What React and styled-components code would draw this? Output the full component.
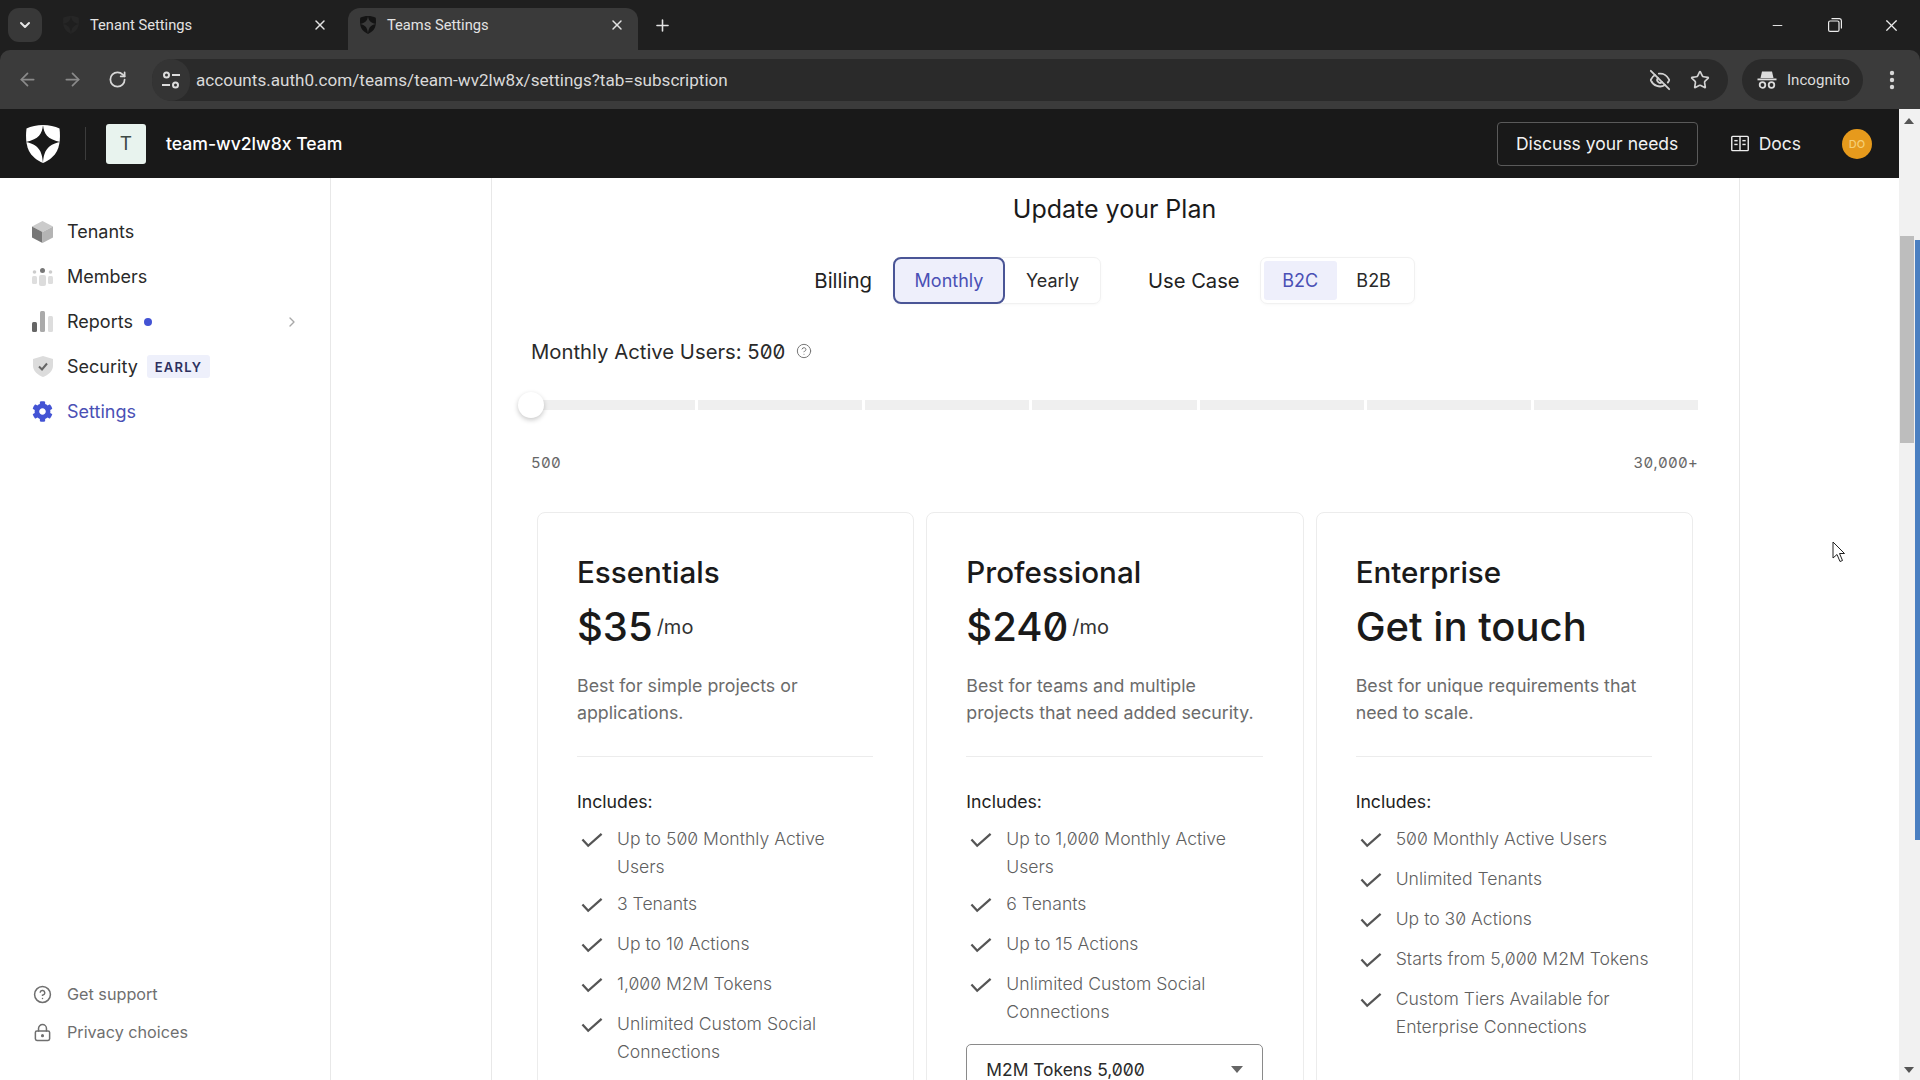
import React from 'react';
import styled, { createGlobalStyle } from 'styled-components';
import { ArrowLeft, ArrowRight, RotateCw, EyeOff, Star, X, Plus, ChevronDown, ChevronRight, CircleHelp, LockKeyhole, Minus } from 'lucide-react';
import { FaCog } from 'react-icons/fa';

const Global = createGlobalStyle`
  html, body { margin: 0; padding: 0; background: #fff; }
  * { box-sizing: border-box; }
  #root { height: 100vh; overflow: hidden; }
`;

const Page = styled.div`
  height: 1080px; display: flex; flex-direction: column; overflow: hidden; position: relative; background: #1f1f1f;
  font-family: Inter, "Liberation Sans", sans-serif; font-feature-settings: "zero" 1; color: #1e1e1e;
`;
const TabStrip = styled.div`
  height: 50px; flex: none; background: #1f1f1f; display: flex; align-items: flex-end; padding-left: 8px;
  font-family: Roboto, "Liberation Sans", sans-serif; font-feature-settings: normal;
`;
const TabList = styled.button`
  width: 34px; height: 34px; margin-bottom: 8px; border: 0; border-radius: 11px; background: #383838; color: #e6e6e6;
  display: flex; align-items: center; justify-content: center; padding: 0;
`;
const Tab = styled.div`
  width: ${p => p.$first ? '283px' : '290px'}; height: 42px; margin-left: ${p => p.$first ? '16px' : '0'}; margin-right: ${p => p.$first ? '7px' : '0'};
  border-radius: 12px 12px 0 0; background: ${p => p.$active ? '#3a3a3a' : 'transparent'};
  display: flex; align-items: center; padding: 0 13px 8px 12px; color: #e3e3e3; font-size: 14.7px; position: relative;
`;
const TabIcon = styled.span`width: 16px; height: 18px; margin-right: 11px; display: flex; flex: none; margin-left: ${p => p.$shift || 0}px;`;
const TabTitle = styled.span`flex: 1; white-space: nowrap;`;
const NewTab = styled.span`margin-left: 15px; margin-bottom: 15px; color: #e3e3e3; display: flex;`;
const WindowControls = styled.div`margin-left: auto; height: 50px; display: flex; color: #ececec;`;
const WinButton = styled.span`width: 57px; display: flex; align-items: center; justify-content: center;`;

const Toolbar = styled.div`
  height: 59px; flex: none; background: #3b3b3b; display: flex; align-items: center; padding-left: 5px;
  border-radius: 10px 10px 0 0; font-family: Roboto, "Liberation Sans", sans-serif; font-feature-settings: normal;
`;
const NavButton = styled.span`width: 45px; display: flex; justify-content: center; color: ${p => p.$dim ? '#8a8a8a' : '#d8d8d8'};`;
const UrlPill = styled.div`
  margin-left: 12px; flex: 1; height: 42px; border-radius: 21px; background: #2a2a2a; display: flex; align-items: center; padding-right: 8px;
`;
const SiteIcon = styled.span`width: 38px; height: 42px; margin-right: 6px; border-radius: 21px; background: #343434; display: flex; align-items: center; justify-content: center; color: #dcdcdc;`;
const Url = styled.span`flex: 1; font-size: 17.1px; color: #d9d9d9; white-space: nowrap;`;
const PillIcon = styled.span`width: 40px; display: flex; justify-content: center; color: #d2d2d2;`;
const Incognito = styled.div`
  margin-left: 14px; width: 121px; height: 42px; border-radius: 21px; background: #2a2a2a; color: #dcdcdc;
  display: flex; align-items: center; padding-left: 15px; gap: 10px; font-size: 15.1px;
`;
const MenuDots = styled.span`width: 57px; display: flex; justify-content: center;`;

const Body = styled.div`flex: 1; display: flex; min-height: 0; background: #fff;`;
const AppArea = styled.div`flex: 1; display: flex; flex-direction: column; min-width: 0;`;
const Header = styled.header`height: 69px; flex: none; background: #191919; display: flex; align-items: center; padding: 0 27px 0 26px; color: #fff;`;
const HeaderDivider = styled.span`width: 1px; height: 33px; background: #3c3c3c; margin: 0 20px 0 25px;`;
const TeamBox = styled.span`width: 40px; height: 40px; background: #e8f3ee; border-radius: 3px; color: #3d4a45; font-size: 19px; display: flex; align-items: center; justify-content: center;`;
const TeamName = styled.span`margin-left: 20px; font-size: 17.6px; font-weight: 500; flex: 1; font-feature-settings: normal;`;
const Discuss = styled.button`
  width: 201px; height: 44px; border: 1px solid #5a5a5a; border-radius: 4px; background: transparent; color: #f2f2f2;
  font: 400 17.5px Inter, sans-serif;
`;
const DocsLink = styled.span`margin-left: 33px; display: flex; align-items: center; gap: 10px; font-size: 17.5px; font-weight: 400; color: #eee;`;
const Avatar = styled.span`margin-left: 41px; width: 30px; height: 30px; border-radius: 50%; background: #e69a1c; color: #f5cf75; font-size: 11px; font-weight: 500; display: flex; align-items: center; justify-content: center;`;

const Content = styled.div`flex: 1; display: flex; min-height: 0;`;
const Sidebar = styled.aside`
  width: 331px; flex: none; border-right: 1px solid #e8e8e8; display: flex; flex-direction: column; justify-content: space-between;
  padding: 31px 0 29px 32px;
`;
const NavList = styled.nav`display: flex; flex-direction: column;`;
const NavRow = styled.div`
  height: 45px; display: flex; align-items: center; font-size: 18px; color: ${p => p.$active ? '#4a50b5' : '#2a2a2a'};
`;
const NavIcon = styled.span`width: 21px; margin-right: 14px; display: flex; justify-content: center; flex: none;`;
const Dot = styled.span`width: 8px; height: 8px; border-radius: 50%; background: #4353d4; margin-left: 11px;`;
const Early = styled.span`margin-left: 9px; height: 23px; padding: 0 8px; display: flex; align-items: center; background: #eef0fb; border-radius: 3px; font-size: 13px; font-weight: 600; letter-spacing: 1.2px; color: #2d2f5e;`;
const NavChevron = styled.span`margin-left: auto; margin-right: 30px; color: #a8a8a8; display: flex;`;
const FootList = styled.div`display: flex; flex-direction: column;`;
const FootRow = styled.div`height: 38px; display: flex; align-items: center; font-size: 16.2px; color: #6f6f6f;`;

const Gutter = styled.div`width: 160px; flex: none;`;
const Main = styled.main`
  width: 1249px; flex: none; border-left: 1px solid #e8e8e8; border-right: 1px solid #e8e8e8; padding: 14px 41px 0 39px; display: flex; flex-direction: column;
  & > * { flex: none; }
`;
const Title = styled.h1`margin: 0; font-size: 25px; line-height: 34px; font-weight: 400; text-align: center; color: #1a1a1a;`;
const Controls = styled.div`margin-top: 31px; height: 47px; display: flex; justify-content: center; align-items: center;`;
const ControlLabel = styled.span`font-size: ${p => p.$second ? '20.2px' : '20.4px'}; margin-right: ${p => p.$second ? '20px' : '21px'}; margin-left: ${p => p.$second ? '47px' : '0'}; color: #222;`;
const Segment = styled.div`height: 47px; display: flex; align-items: center; border: 1px solid #f1f1f1; border-radius: 7px; padding: 0 ${p => p.$pad || 0}px; box-shadow: 0 1px 3px rgba(0,0,0,.03);`;
const SegOption = styled.span`
  height: ${p => p.$boxed ? '47px' : '39px'}; width: ${p => p.$w}px; margin-left: ${p => p.$boxed ? '-1px' : '0'};
  display: flex; align-items: center; justify-content: center; font-size: 18px;
  color: ${p => p.$boxed || p.$soft ? '#4a50b5' : '#2a2a2a'};
  background: ${p => p.$boxed || p.$soft ? '#eeeffb' : 'transparent'};
  border: ${p => p.$boxed ? '2px solid #4a5596' : '0'};
  border-radius: ${p => p.$boxed ? '8px' : '3px'};
`;
const MauRow = styled.div`margin-top: 33px; height: 28px; display: flex; align-items: center; gap: 11px; font-size: 20.3px; color: #2a2a2a; font-weight: 400;`;
const MauHelp = styled.span`color: #777; display: flex;`;
const Slider = styled.div`margin-top: 27px; height: 26px; display: flex; align-items: center; position: relative;`;
const Track = styled.div`flex: 1; height: 10px; display: flex; gap: 3px;`;
const TrackPart = styled.span`flex: 1; background: #efefef;`;
const Thumb = styled.span`
  position: absolute; left: -13px; top: 0; width: 26px; height: 26px; border-radius: 50%; background: #fff; box-shadow: 0 2px 5px rgba(0,0,0,.22);
`;
const Ends = styled.div`margin-top: 35px; height: 20px; display: flex; justify-content: space-between; font-size: 15px; line-height: 20px; letter-spacing: .3px; color: #666; font-feature-settings: "zero" 1, "tnum" 1;`;
const Cards = styled.div`margin-top: 39px; padding: 0 5px 0 6px; display: grid; grid-template-columns: repeat(3, 1fr); gap: 12px; align-items: start;`;
const Card = styled.section`border: 1px solid #ececec; border-radius: 8px; padding: 41px 40px 40px 39px; height: 700px;`;
const PlanName = styled.h2`margin: 0; font-size: 29.6px; line-height: 36px; font-weight: 450; color: #1a1a1a;`;
const PriceRow = styled.div`margin-top: 13px; height: 48px; display: flex; align-items: center; gap: 4px;`;
const Price = styled.span`font-size: 40px; line-height: 48px; font-weight: 450; color: #1a1a1a;`;
const Per = styled.span`font-size: 20px; color: #333;`;
const Desc = styled.p`margin: 21px 0 0; font-size: 17.8px; line-height: 27px; color: #6b6b6b; height: 54px;`;
const Rule = styled.hr`margin: 30px 0 0; border: 0; height: 1px; background: #ececec;`;
const Includes = styled.div`margin-top: 31px; font-size: 17.7px; line-height: 28px; color: #222;`;
const Features = styled.ul`list-style: none; margin: 9px 0 0; padding: 0; display: flex; flex-direction: column; gap: 10px;`;
const Feature = styled.li`display: flex; min-height: 30px; font-size: 17.6px; line-height: 27.5px; font-weight: 300; color: #5f5f5f;`;
const CheckCell = styled.span`width: 40px; height: 30px; flex: none; padding-left: 4px; display: flex; align-items: center; color: #555;`;
const TokenSelect = styled.div`
  margin-top: 19px; height: 50px; border: 1px solid #8a8a8a; border-radius: 5px; display: flex; align-items: center; justify-content: space-between;
  padding: 0 19px; font-size: 17.4px; color: #2a2a2a;
`;
const Caret = styled.span`width: 0; height: 0; border-left: 6px solid transparent; border-right: 6px solid transparent; border-top: 7px solid #666;`;

const Scrollbar = styled.div`width: 21px; flex: none; background: #f1f1f1; position: relative;`;
const ScrollArrow = styled.span`
  position: absolute; left: 5px; width: 0; height: 0; border-left: 5px solid transparent; border-right: 5px solid transparent;
  ${p => p.$down ? 'bottom: 7px; border-top: 6px solid #555;' : 'top: 9px; border-bottom: 6px solid #555;'}
`;
const ScrollThumb = styled.span`position: absolute; left: 1px; top: 127px; width: 14px; height: 207px; background: #bdbdbd;`;
const ScrollMark = styled.span`position: absolute; right: 0; top: 131px; width: 5px; height: 600px; background: #4a7fc1;`;
const Pointer = styled.svg`position: absolute; left: 1832px; top: 541px;`;

const Shield = ({ size = 34, fill = '#fff', bg = '#191919' }) => (
  <svg width={size} height={size * 38 / 34} viewBox="0 0 34 38">
    <path d="M17 0C23 0 29 1.500 33.500 3.500C34.500 12 34 20 31 26C28.500 31 23 35.500 17 38C11 35.500 5.500 31 3 26C0 20-.5 12 .5 3.500C5 1.500 11 0 17 0Z" fill={fill} />
    <path d="M17 0C18 9 21 14 34 17C21 20 18 26 17 38C16 26 13 20 0 17C13 14 16 9 17 0Z" fill={bg} />
  </svg>
);
const Check = () => (
  <svg width="23" height="16" viewBox="0 0 24 16" fill="none" stroke="currentColor" strokeWidth="2.400">
    <polyline points="1.500 7.500 7.500 14 21.500 1.500" />
  </svg>
);
const Cube = () => (
  <svg width="21" height="22" viewBox="0 0 21 22">
    <polygon points="10.500,0 21,5.500 10.500,11 0,5.500" fill="#cbcbcb" />
    <polygon points="0,5.500 10.500,11 10.500,22 0,16.500" fill="#777" />
    <polygon points="21,5.500 10.500,11 10.500,22 21,16.500" fill="#b4b4b4" />
  </svg>
);
const People = () => (
  <svg width="21" height="18" viewBox="0 0 21 18">
    <circle cx="10.500" cy="2.500" r="2.500" fill="#777" />
    <circle cx="2.500" cy="4" r="1.800" fill="#ccc" /><circle cx="18.500" cy="4" r="1.800" fill="#ccc" />
    <rect x="7" y="7" width="7" height="11" rx="2" fill="#dcdcdc" />
    <rect x="0" y="8" width="5" height="8" rx="1.500" fill="#dedede" /><rect x="16" y="8" width="5" height="8" rx="1.500" fill="#dedede" />
  </svg>
);
const Bars = () => (
  <svg width="21" height="21" viewBox="0 0 21 21">
    <rect x="0" y="11" width="5" height="10" rx="1.500" fill="#666" />
    <rect x="8" y="0" width="5" height="21" rx="1.500" fill="#aaa" />
    <rect x="16" y="5" width="5" height="16" rx="1.500" fill="#ddd" />
  </svg>
);
const Guard = () => (
  <svg width="20" height="21" viewBox="0 0 20 21">
    <path d="M10 0L20 3V10C20 15 15 19 10 21C5 19 0 15 0 10V3Z" fill="#dcdcdc" />
    <polyline points="6 10.500 9 13.500 14 7.500" fill="none" stroke="#666" strokeWidth="2" />
  </svg>
);
const Tune = () => (
  <svg width="20" height="20" viewBox="0 0 20 20" fill="none" stroke="currentColor" strokeWidth="2">
    <circle cx="5.500" cy="5" r="2.500" /><line x1="11" y1="5" x2="19" y2="5" />
    <circle cx="14.500" cy="15" r="2.500" /><line x1="1" y1="15" x2="9" y2="15" />
  </svg>
);
const Spy = () => (
  <svg width="20" height="20" viewBox="0 0 20 20" fill="currentColor">
    <path d="M5 1.500H15L16.500 8H3.500Z" /><rect x="0.500" y="8.500" width="19" height="1.800" />
    <circle cx="5.500" cy="15" r="2.800" fill="none" stroke="currentColor" strokeWidth="1.800" />
    <circle cx="14.500" cy="15" r="2.800" fill="none" stroke="currentColor" strokeWidth="1.800" />
  </svg>
);
const Restore = () => (
  <svg width="14" height="14" viewBox="0 0 14 14" fill="none" stroke="currentColor" strokeWidth="1.200">
    <rect x="0.600" y="3" width="10.400" height="10.400" rx="1.500" /><path d="M3.500 .7H11.500A2 2 0 0 1 13.400 2.700V10.500" />
  </svg>
);
const Book = () => (
  <svg width="18" height="17" viewBox="0 0 19 17" fill="none" stroke="currentColor" strokeWidth="1.500">
    <rect x=".8" y="1" width="17.400" height="15" rx="1" /><line x1="9.500" y1="1" x2="9.500" y2="16" />
    <line x1="3.500" y1="5.500" x2="7" y2="5.500" /><line x1="3.500" y1="9.500" x2="7" y2="9.500" />
    <line x1="12" y1="5.500" x2="15.500" y2="5.500" /><line x1="12" y1="9.500" x2="15.500" y2="9.500" />
  </svg>
);

const plans = [
  { name: 'Essentials', price: '$35', per: '/mo', desc: 'Best for simple projects or applications.',
    items: ['Up to 500 Monthly Active Users', '3 Tenants', 'Up to 10 Actions', '1,000 M2M Tokens', 'Unlimited Custom Social Connections'] },
  { name: 'Professional', price: '$240', per: '/mo', desc: 'Best for teams and multiple projects that need added security.',
    items: ['Up to 1,000 Monthly Active Users', '6 Tenants', 'Up to 15 Actions', 'Unlimited Custom Social Connections'], select: 'M2M Tokens 5,000' },
  { name: 'Enterprise', price: 'Get in touch', desc: 'Best for unique requirements that need to scale.',
    items: ['500 Monthly Active Users', 'Unlimited Tenants', 'Up to 30 Actions', 'Starts from 5,000 M2M Tokens', 'Custom Tiers Available for Enterprise Connections'] },
];

export default function App() {
  return (
    <Page>
      <Global />
      <TabStrip>
        <TabList><ChevronDown size={16} strokeWidth={3} /></TabList>
        <Tab $first>
          <TabIcon $shift={-7}><Shield size={16} fill="#262626" bg="#1f1f1f" /></TabIcon>
          <TabTitle>Tenant Settings</TabTitle><X size={16} strokeWidth={2.2} />
        </Tab>
        <Tab $active>
          <TabIcon><Shield size={16} fill="#141414" bg="#3a3a3a" /></TabIcon>
          <TabTitle>Teams Settings</TabTitle><X size={16} strokeWidth={2.2} />
        </Tab>
        <NewTab><Plus size={19} strokeWidth={2} /></NewTab>
        <WindowControls>
          <WinButton><Minus size={15} strokeWidth={1.5} /></WinButton>
          <WinButton><Restore /></WinButton>
          <WinButton><X size={19} strokeWidth={1.5} /></WinButton>
        </WindowControls>
      </TabStrip>
      <Toolbar>
        <NavButton $dim><ArrowLeft size={21} /></NavButton>
        <NavButton $dim><ArrowRight size={21} /></NavButton>
        <NavButton><RotateCw size={19} strokeWidth={2.2} /></NavButton>
        <UrlPill>
          <SiteIcon><Tune /></SiteIcon>
          <Url>accounts.auth0.com/teams/team-wv2lw8x/settings?tab=subscription</Url>
          <PillIcon><EyeOff size={22} /></PillIcon>
          <PillIcon><Star size={20} /></PillIcon>
        </UrlPill>
        <Incognito><Spy />Incognito</Incognito>
        <MenuDots>
          <svg width="6" height="20" viewBox="0 0 6 20" fill="#d8d8d8"><circle cx="3" cy="3" r="2.200" /><circle cx="3" cy="10" r="2.200" /><circle cx="3" cy="17" r="2.200" /></svg>
        </MenuDots>
      </Toolbar>
      <Body>
        <AppArea>
          <Header>
            <Shield />
            <HeaderDivider />
            <TeamBox>T</TeamBox>
            <TeamName>team-wv2lw8x Team</TeamName>
            <Discuss>Discuss your needs</Discuss>
            <DocsLink><Book />Docs</DocsLink>
            <Avatar>DO</Avatar>
          </Header>
          <Content>
            <Sidebar>
              <NavList>
                <NavRow><NavIcon><Cube /></NavIcon>Tenants</NavRow>
                <NavRow><NavIcon><People /></NavIcon>Members</NavRow>
                <NavRow><NavIcon><Bars /></NavIcon>Reports<Dot /><NavChevron><ChevronRight size={16} /></NavChevron></NavRow>
                <NavRow><NavIcon><Guard /></NavIcon>Security<Early>EARLY</Early></NavRow>
                <NavRow $active><NavIcon><FaCog size={21} color="#4353d4" /></NavIcon>Settings</NavRow>
              </NavList>
              <FootList>
                <FootRow><NavIcon><CircleHelp size={19} strokeWidth={1.900} /></NavIcon>Get support</FootRow>
                <FootRow><NavIcon><LockKeyhole size={19} strokeWidth={1.900} /></NavIcon>Privacy choices</FootRow>
              </FootList>
            </Sidebar>
            <Gutter />
            <Main>
              <Title>Update your Plan</Title>
              <Controls>
                <ControlLabel>Billing</ControlLabel>
                <Segment><SegOption $boxed $w={112}>Monthly</SegOption><SegOption $w={95}>Yearly</SegOption></Segment>
                <ControlLabel $second>Use Case</ControlLabel>
                <Segment $pad={3}><SegOption $soft $w={73}>B2C</SegOption><SegOption $w={74}>B2B</SegOption></Segment>
              </Controls>
              <MauRow>Monthly Active Users: 500<MauHelp><CircleHelp size={16} strokeWidth={1.500} /></MauHelp></MauRow>
              <Slider>
                <Track>{[0, 1, 2, 3, 4, 5, 6].map(i => <TrackPart key={i} />)}</Track>
                <Thumb />
              </Slider>
              <Ends><span>500</span><span>30,000+</span></Ends>
              <Cards>
                {plans.map(plan => (
                  <Card key={plan.name}>
                    <PlanName>{plan.name}</PlanName>
                    <PriceRow><Price>{plan.price}</Price>{plan.per && <Per>{plan.per}</Per>}</PriceRow>
                    <Desc>{plan.desc}</Desc>
                    <Rule />
                    <Includes>Includes:</Includes>
                    <Features>
                      {plan.items.map(item => (
                        <Feature key={item}><CheckCell><Check /></CheckCell><span>{item}</span></Feature>
                      ))}
                    </Features>
                    {plan.select && <TokenSelect>{plan.select}<Caret /></TokenSelect>}
                  </Card>
                ))}
              </Cards>
            </Main>
          </Content>
        </AppArea>
        <Scrollbar>
          <ScrollArrow />
          <ScrollThumb />
          <ScrollMark />
          <ScrollArrow $down />
        </Scrollbar>
      </Body>
      <Pointer width="13" height="22" viewBox="0 0 13 22">
        <path d="M1 1V17L5 13.500L8 20.500L10.500 19.500L7.500 12.500H12.500Z" fill="#fff" stroke="#222" strokeWidth="1" />
      </Pointer>
    </Page>
  );
}
